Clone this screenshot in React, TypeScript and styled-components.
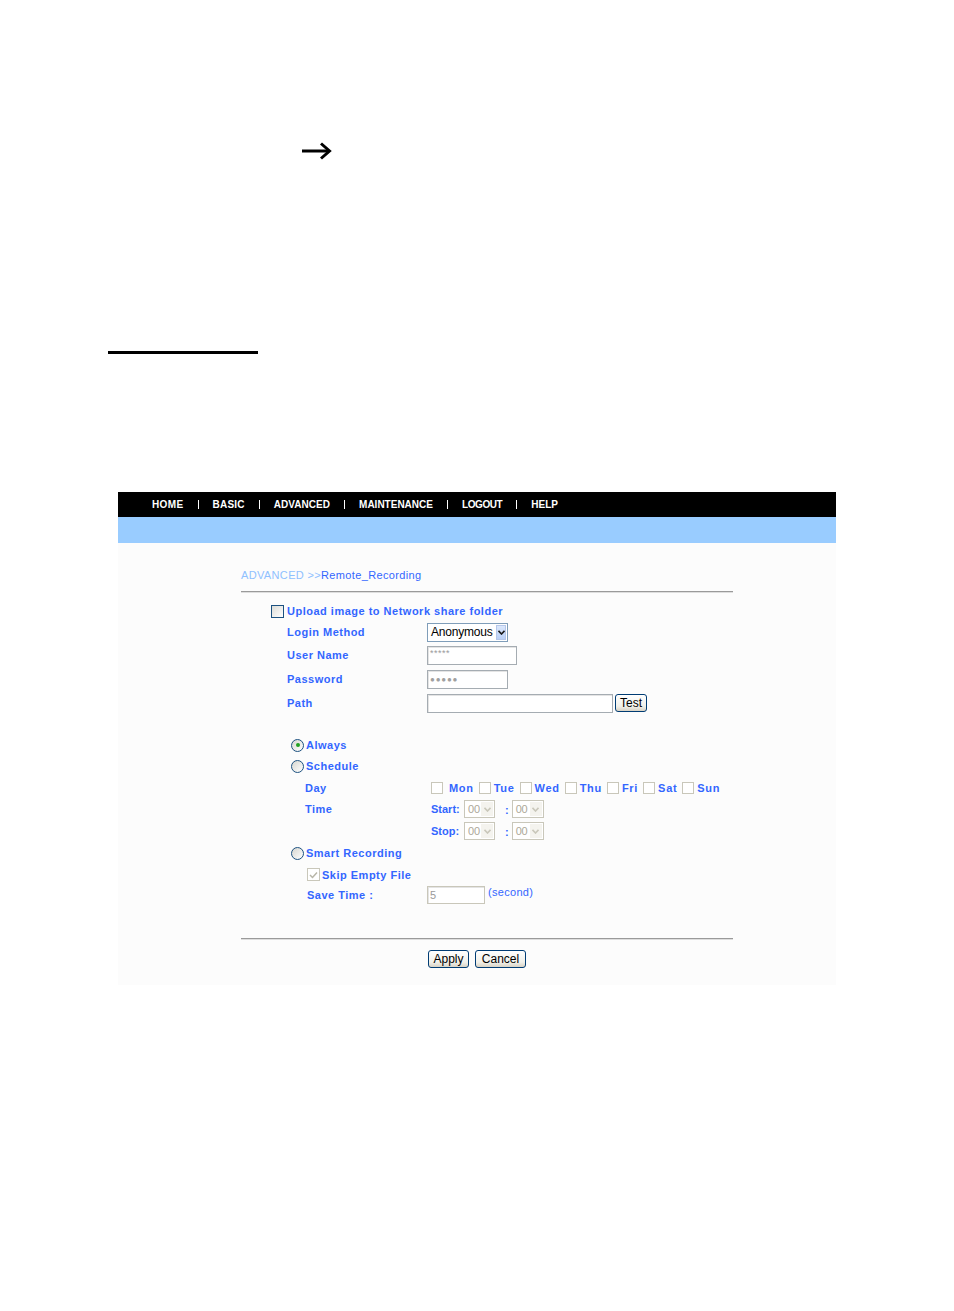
import React from "react";
import styled, { createGlobalStyle } from "styled-components";

const GlobalStyle = createGlobalStyle`
  body {
    margin: 0;
    background: #ffffff;
    font-family: "Liberation Sans", Arial, sans-serif;
  }
`;

const Page = styled.div`
  width: 954px;
  min-height: 1311px;
  padding-top: 142px;
  box-sizing: border-box;
`;

const ArrowWrap = styled.div`
  margin-left: 301px;
  width: 32px;
  height: 18px;
`;

const BlankLine = styled.div`
  margin: 191px 0 0 108px;
  width: 150px;
  height: 3px;
  background: #000;
`;

const Panel = styled.div`
  margin: 138px 0 0 118px;
  width: 718px;
  height: 493px;
  background: #fcfcfc;
`;

const NavBar = styled.div`
  height: 25px;
  background: #000;
  display: flex;
  align-items: center;
  gap: 14px;
  padding-left: 34px;
`;

const NavItem = styled.span<{ $ls?: number }>`
  color: #fff;
  font-weight: bold;
  font-size: 10px;
  line-height: 12px;
  letter-spacing: ${(p) => p.$ls ?? 0}px;
`;

const NavSep = styled.span`
  width: 1px;
  height: 9px;
  background: #fff;
`;

const Band = styled.div`
  height: 26px;
  background: #99ccff;
`;

const Content = styled.div`
  width: 492px;
  margin-left: 123px;
  padding-top: 26px;
`;

const Crumb = styled.div`
  font-size: 11px;
  line-height: 13px;
  letter-spacing: 0.35px;
  color: #3366ff;
`;

const CrumbLight = styled.span`
  color: #8fc0ff;
`;

const Rule = styled.div<{ $top: number }>`
  margin-top: ${(p) => p.$top}px;
  border-top: 1px solid #9a9a9a;
  border-bottom: 1px solid #dedede;
`;

const Row = styled.div<{ $h: number; $indent: number; $top?: number }>`
  display: flex;
  align-items: center;
  height: ${(p) => p.$h}px;
  margin-top: ${(p) => p.$top ?? 0}px;
  padding-left: ${(p) => p.$indent}px;
`;

const LabelCell = styled.div<{ $w: number }>`
  width: ${(p) => p.$w}px;
  flex-shrink: 0;
  display: flex;
  align-items: center;
`;

const Label = styled.span<{ $gap?: number; $ls?: number }>`
  color: #3366ff;
  font-weight: bold;
  font-size: 11px;
  letter-spacing: ${(p) => p.$ls ?? 0.5}px;
  margin-left: ${(p) => p.$gap ?? 0}px;
  white-space: nowrap;
`;

const Note = styled.span`
  color: #3366ff;
  font-size: 11px;
  letter-spacing: 0.3px;
  margin-left: 3px;
  align-self: flex-start;
  margin-top: 1px;
`;

const Check = styled.span<{ $disabled?: boolean; $size?: number }>`
  box-sizing: border-box;
  width: ${(p) => p.$size ?? 13}px;
  height: ${(p) => p.$size ?? 13}px;
  flex-shrink: 0;
  border: 1px solid ${(p) => (p.$disabled ? "#c9c7ba" : "#1c5180")};
  background: ${(p) =>
    p.$disabled ? "#ffffff" : "linear-gradient(135deg, #dcdcd7, #ffffff)"};
  display: flex;
  align-items: center;
  justify-content: center;
`;

const Radio = styled.span<{ $on?: boolean }>`
  box-sizing: border-box;
  width: 13px;
  height: 13px;
  border-radius: 50%;
  border: 1px solid #1c5180;
  background: linear-gradient(135deg, #d6d6d0, #ffffff);
  display: flex;
  align-items: center;
  justify-content: center;
  &::after {
    content: "";
    display: ${(p) => (p.$on ? "block" : "none")};
    width: 4px;
    height: 4px;
    border-radius: 50%;
    background: #21a121;
  }
`;

const TextBox = styled.div<{ $w: number; $disabled?: boolean }>`
  box-sizing: border-box;
  width: ${(p) => p.$w}px;
  height: ${(p) => (p.$disabled ? 18 : 19)}px;
  border: 1px solid ${(p) => (p.$disabled ? "#c9c7ba" : "#a5acb2")};
  box-shadow: inset 1px 1px 0 #e4e4e4;
  background: #fff;
  display: flex;
  align-items: center;
  padding-left: 2px;
  font-size: 11px;
  color: #9a9a9a;
`;

const Stars = styled.span`
  font-size: 9px;
  letter-spacing: 0.5px;
  color: #9a9a9a;
  align-self: flex-start;
  margin-top: 1px;
`;

const Dots = styled.span`
  font-size: 8px;
  letter-spacing: 0.8px;
  color: #a0a0a0;
`;

const SelectBox = styled.div<{ $w: number; $disabled?: boolean }>`
  box-sizing: border-box;
  width: ${(p) => p.$w}px;
  height: ${(p) => (p.$disabled ? 18 : 19)}px;
  border: 1px solid ${(p) => (p.$disabled ? "#c9c7ba" : "#7f9db9")};
  background: #fff;
  display: flex;
  align-items: stretch;
  padding: 1px;
  font-size: ${(p) => (p.$disabled ? 11 : 12)}px;
  color: ${(p) => (p.$disabled ? "#aca899" : "#000")};
`;

const SelectText = styled.span`
  flex: 1;
  display: flex;
  align-items: center;
  padding-left: 2px;
  letter-spacing: -0.2px;
`;

const SelectBtn = styled.span<{ $disabled?: boolean }>`
  width: ${(p) => (p.$disabled ? 12 : 10)}px;
  background: ${(p) =>
    p.$disabled ? "#f4f3ee" : "linear-gradient(#dbe7fb, #b9d0f7)"};
  border: ${(p) => (p.$disabled ? "none" : "1px solid #b5c7ea")};
  box-sizing: border-box;
  display: flex;
  align-items: center;
  justify-content: center;
`;

const XPButton = styled.button<{ $w: number; $gap?: number }>`
  box-sizing: border-box;
  width: ${(p) => p.$w}px;
  height: 18px;
  padding: 0;
  margin-left: ${(p) => p.$gap ?? 0}px;
  border: 1px solid #003c74;
  border-radius: 3px;
  background: linear-gradient(#ffffff, #f0f0ea 70%, #d8d2c4);
  font-family: "Liberation Sans", Arial, sans-serif;
  font-size: 12px;
  color: #000;
  line-height: 14px;
`;

const Colon = styled.span`
  color: #3366ff;
  font-weight: bold;
  font-size: 11px;
  margin: 2px 3px 0 10px;
`;

const TimeLabel = styled(Label)`
  letter-spacing: 0;
  width: 33px;
`;

const DayItem = styled.span<{ $first?: boolean }>`
  display: flex;
  align-items: center;
  margin-left: ${(p) => (p.$first ? 4 : 5)}px;
`;

const ButtonRow = styled.div`
  display: flex;
  gap: 6px;
  margin: 10px 0 0 187px;
`;

const Chevron = ({ color }: { color: string }) => (
  <svg width="7" height="5" viewBox="0 0 7 5">
    <polyline points="0.5,0.8 3.5,4 6.5,0.8" fill="none" stroke={color} strokeWidth="1.6" />
  </svg>
);

const Select = ({ w, value, disabled }: { w: number; value: string; disabled?: boolean }) => (
  <SelectBox $w={w} $disabled={disabled}>
    <SelectText>{value}</SelectText>
    <SelectBtn $disabled={disabled}>
      <Chevron color={disabled ? "#c9c7ba" : "#1a1a1a"} />
    </SelectBtn>
  </SelectBox>
);

const TimeRow = ({ label, indent, title }: { label: string; indent: number; title?: string }) => (
  <Row $h={22} $indent={indent}>
    {title && (
      <LabelCell $w={126}>
        <Label>{title}</Label>
      </LabelCell>
    )}
    <TimeLabel>{label}</TimeLabel>
    <Select w={31} value="00" disabled />
    <Colon>:</Colon>
    <Select w={32} value="00" disabled />
  </Row>
);

const days = ["Mon", "Tue", "Wed", "Thu", "Fri", "Sat", "Sun"];

export default function App() {
  return (
    <Page>
      <GlobalStyle />
      <ArrowWrap>
        <svg width="32" height="18" viewBox="0 0 32 18">
          <line x1="1" y1="9" x2="28" y2="9" stroke="#000" strokeWidth="3" />
          <polyline points="20,1.5 28.5,9 20,16.5" fill="none" stroke="#000" strokeWidth="3" />
        </svg>
      </ArrowWrap>
      <BlankLine />
      <Panel>
        <NavBar>
          <NavItem $ls={0.4}>HOME</NavItem>
          <NavSep />
          <NavItem $ls={0.2}>BASIC</NavItem>
          <NavSep />
          <NavItem $ls={0.05}>ADVANCED</NavItem>
          <NavSep />
          <NavItem>MAINTENANCE</NavItem>
          <NavSep />
          <NavItem $ls={-0.4}>LOGOUT</NavItem>
          <NavSep />
          <NavItem>HELP</NavItem>
        </NavBar>
        <Band />
        <Content>
          <Crumb>
            <CrumbLight>ADVANCED &gt;&gt;</CrumbLight>Remote_Recording
          </Crumb>
          <Rule $top={9} />

          <Row $h={20} $indent={30} $top={8}>
            <Check />
            <Label $gap={3}>Upload image to Network share folder</Label>
          </Row>
          <Row $h={22} $indent={46}>
            <LabelCell $w={140}>
              <Label>Login Method</Label>
            </LabelCell>
            <Select w={81} value="Anonymous" />
          </Row>
          <Row $h={24} $indent={46}>
            <LabelCell $w={140}>
              <Label>User Name</Label>
            </LabelCell>
            <TextBox $w={90}>
              <Stars>*****</Stars>
            </TextBox>
          </Row>
          <Row $h={24} $indent={46}>
            <LabelCell $w={140}>
              <Label>Password</Label>
            </LabelCell>
            <TextBox $w={81}>
              <Dots>●●●●●</Dots>
            </TextBox>
          </Row>
          <Row $h={24} $indent={46}>
            <LabelCell $w={140}>
              <Label>Path</Label>
            </LabelCell>
            <TextBox $w={186} />
            <XPButton $w={32} $gap={2}>
              Test
            </XPButton>
          </Row>

          <Row $h={20} $indent={50} $top={20}>
            <Radio $on />
            <Label $gap={2}>Always</Label>
          </Row>
          <Row $h={22} $indent={50}>
            <Radio />
            <Label $gap={2}>Schedule</Label>
          </Row>
          <Row $h={21} $indent={64}>
            <LabelCell $w={122}>
              <Label>Day</Label>
            </LabelCell>
            {days.map((d, i) => (
              <DayItem key={d} $first={i === 0}>
                <Check $disabled $size={12} />
                <Label $gap={i === 0 ? 6 : 3} $ls={0.7}>
                  {d}
                </Label>
              </DayItem>
            ))}
          </Row>
          <TimeRow indent={64} title="Time" label="Start:" />
          <TimeRow indent={190} label="Stop:" />
          <Row $h={22} $indent={50}>
            <Radio />
            <Label $gap={2}>Smart Recording</Label>
          </Row>
          <Row $h={21} $indent={66}>
            <Check $disabled>
              <svg width="9" height="8" viewBox="0 0 9 8">
                <polyline points="1,4 3.5,6.5 8,1.5" fill="none" stroke="#b8b6a8" strokeWidth="1.5" />
              </svg>
            </Check>
            <Label $gap={2}>Skip Empty File</Label>
          </Row>
          <Row $h={20} $indent={66}>
            <LabelCell $w={120}>
              <Label>Save Time :</Label>
            </LabelCell>
            <TextBox $w={58} $disabled>
              5
            </TextBox>
            <Note>(second)</Note>
          </Row>

          <Rule $top={33} />
          <ButtonRow>
            <XPButton $w={41}>Apply</XPButton>
            <XPButton $w={51}>Cancel</XPButton>
          </ButtonRow>
        </Content>
      </Panel>
    </Page>
  );
}
